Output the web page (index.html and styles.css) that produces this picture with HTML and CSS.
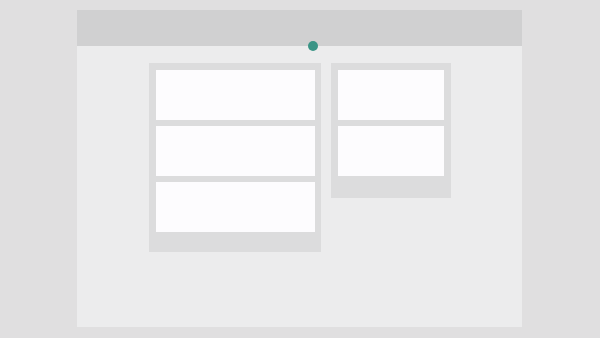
FILE: index.html
```html
<!DOCTYPE html>
<html lang="en">
<head>
<meta charset="utf-8">
<title>Board</title>
<link rel="stylesheet" href="styles.css">
</head>
<body>
<div class="window">
  <div class="titlebar"></div>
  <span class="status-dot"></span>
  <div class="board">
    <div class="column column-wide">
      <div class="card"></div>
      <div class="card"></div>
      <div class="card"></div>
    </div>
    <div class="column column-narrow">
      <div class="card"></div>
      <div class="card"></div>
    </div>
  </div>
</div>
</body>
</html>
```
FILE: styles.css
```css
html, body {
  margin: 0;
  padding: 0;
}
body {
  background: #e0dfe0;
  width: 600px;
  height: 338px;
  overflow: hidden;
  font-family: "Liberation Sans", Arial, sans-serif;
}
.window {
  position: relative;
  margin: 10px 0 0 77px;
  width: 445px;
  height: 317px;
  background: #ececed;
}
.titlebar {
  height: 36px;
  background: #d0d0d1;
}
.status-dot {
  position: absolute;
  left: 231px;
  top: 31px;
  width: 10px;
  height: 10px;
  border-radius: 50%;
  background: #3a9486;
}
.board {
  display: flex;
  align-items: flex-start;
  gap: 10px;
  padding: 17px 0 0 72px;
}
.column {
  display: flex;
  flex-direction: column;
  gap: 6px;
  background: #dcdcdd;
  padding: 7px 6px 20px 7px;
  box-sizing: border-box;
}
.column-wide {
  width: 172px;
}
.column-narrow {
  width: 120px;
  padding-right: 7px;
  padding-bottom: 22px;
}
.card {
  height: 50px;
  background: #fdfcfe;
}
```
